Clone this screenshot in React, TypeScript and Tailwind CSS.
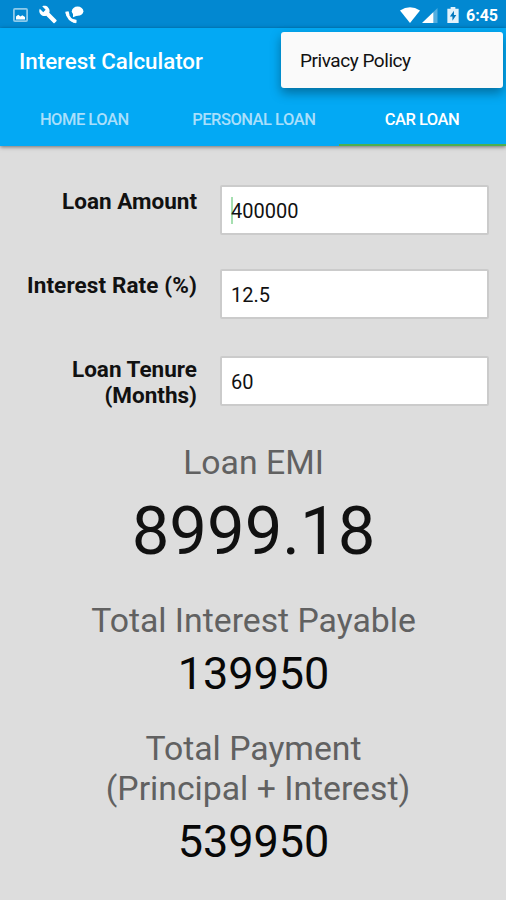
import type { ReactNode } from "react";

function StatusBar() {
  return (
    <div className="flex h-7 shrink-0 items-center bg-[#0288d1] pl-[13px] pr-2 text-white">
      <svg className="mt-px" width="15" height="14" viewBox="0 0 15 14" fill="none">
        <rect x="0.9" y="0.9" width="13.2" height="12.2" rx="1" stroke="#8ecaea" strokeWidth="1.8" />
        <path d="M3 11.5V8.5l2.2-1.8 2.3 1.8 1.8-1.2L12 9v2.5z" fill="#fff" />
      </svg>
      <svg className="ml-[10px] mt-px" width="20" height="19" viewBox="0 0 24 24" fill="currentColor">
        <path d="M22.7 19l-9.1-9.1c.9-2.3.4-5-1.5-6.9-2-2-5-2.4-7.4-1.3L9 6 6 9 1.6 4.7C.4 7.1.9 10.1 2.9 12.1c1.9 1.9 4.6 2.4 6.9 1.5l9.1 9.1c.4.4 1 .4 1.4 0l2.3-2.3c.5-.4.5-1.1.1-1.4z" />
      </svg>
      <svg className="ml-[7px] mt-px" width="20" height="18" viewBox="0 0 20 18" fill="currentColor">
        <path d="M1.8 6.2Q3.2 14 11 15.8" fill="none" stroke="currentColor" strokeWidth="3" />
        <path d="M0.3 5.8l3.2-.6 1 3.6-2.6 1.4zM7.6 13.2l3.8.5.2 3.1-3.6-.4z" />
        <ellipse cx="12.6" cy="5.2" rx="5.8" ry="4.6" />
        <path d="M8 7v4.3l5-2z" />
      </svg>
      <div className="ml-auto flex items-center">
        <svg className="mt-px" width="20" height="16" viewBox="0 0 20 16" fill="currentColor">
          <path d="M0 3.6Q10-3 20 3.6L10 16z" />
        </svg>
        <svg className="ml-[2px] mt-[2px]" width="16" height="15" viewBox="0 0 17 16">
          <path d="M0 16L16.5 0v16z" fill="#53aee0" />
          <path d="M0 16L12 4.4V16z" fill="#fff" />
        </svg>
        <svg className="ml-[9px] mt-[2px]" width="12" height="16" viewBox="0 0 12 17">
          <path d="M3.5 0h5v1.8H12V17H0V1.8h3.5z" fill="#e3f2fb" />
          <path d="M7 4L2.7 10h2.7v4.5L9.5 8.4H7z" fill="#0277bd" />
        </svg>
        <span className="ml-[7px] mt-[3px] text-[16px] leading-none font-bold">6:45</span>
      </div>
    </div>
  );
}

function Tab({ label, active = false }: { label: string; active?: boolean }) {
  return (
    <div
      className={
        active
          ? "flex w-[167px] items-center justify-center border-b-2 border-[#4caf50] pr-px pt-[2px] text-white"
          : "flex flex-1 items-center justify-center border-b-2 border-transparent pr-px pt-[2px] text-[#a9dffb]"
      }
    >
      {label}
    </div>
  );
}

function Field({ label, value, focused = false }: { label: ReactNode; value: string; focused?: boolean }) {
  return (
    <div className="flex items-start">
      <div className="w-[197px] pt-[3px] text-right text-[22.5px] leading-[26px] font-bold text-[#111]">{label}</div>
      <div className="ml-[23px] flex h-[50px] w-[269px] items-center rounded-[2px] border-2 border-[#cbcbcb] bg-white pl-[9px] pt-px text-[20px] text-[#111]">
        {focused && <span className="-mr-[2px] h-[27px] w-[2px] bg-[#a5dfb0]" />}
        {value}
      </div>
    </div>
  );
}

export default function App() {
  return (
    <div className="relative flex h-[900px] w-[506px] flex-col overflow-hidden bg-[#dddddd] font-[Roboto,sans-serif]">
      <StatusBar />
      <header className="flex h-[118px] shrink-0 flex-col bg-[#03a9f4] shadow-[0_1px_4px_rgba(0,0,0,0.5)]">
        <h1 className="flex h-[66px] items-center pl-[19px] pt-[2px] text-[22.3px] font-medium text-white">Interest Calculator</h1>
        <nav className="flex flex-1 text-[16.5px] font-medium tracking-[-0.03em]">
          <Tab label="HOME LOAN" />
          <Tab label="PERSONAL LOAN" />
          <Tab label="CAR LOAN" active />
        </nav>
      </header>

      <section className="mt-[39px] flex flex-col">
        <Field label="Loan Amount" value="400000" focused />
        <div className="h-[34px]" />
        <Field label={<span className="tracking-[0.005em]">Interest Rate (%)</span>} value="12.5" />
        <div className="h-[37px]" />
        <Field
          label={
            <div className="-mt-[3px]">
              Loan Tenure
              <br />
              (Months)
            </div>
          }
          value="60"
        />
      </section>

      <section className="mt-[35px] flex flex-col items-center pl-px text-center text-[33.75px] leading-[40px] text-[#616161]">
        <div>Loan EMI</div>
        <div className="mt-[8px] text-[67px] leading-[80px] text-[#111]">8999.18</div>
        <div className="mt-[30px]">Total Interest Payable</div>
        <div className="mt-[6px] text-[45px] leading-[53px] text-[#080808]">139950</div>
        <div className="mt-[29px]">
          Total Payment
          <br />
          <span className="pl-[9px]">(Principal + Interest)</span>
        </div>
        <div className="mt-[6px] text-[45px] leading-[53px] text-[#080808]">539950</div>
      </section>

      <div className="absolute left-[281px] top-[32px] flex h-[56px] w-[222px] items-center rounded-[3px] bg-[#fafafa] pl-[19px] pt-[2px] text-[19px] tracking-[-0.024em] text-[#111] shadow-[0_5px_11px_rgba(0,0,0,0.35)]">
        Privacy Policy
      </div>
    </div>
  );
}
